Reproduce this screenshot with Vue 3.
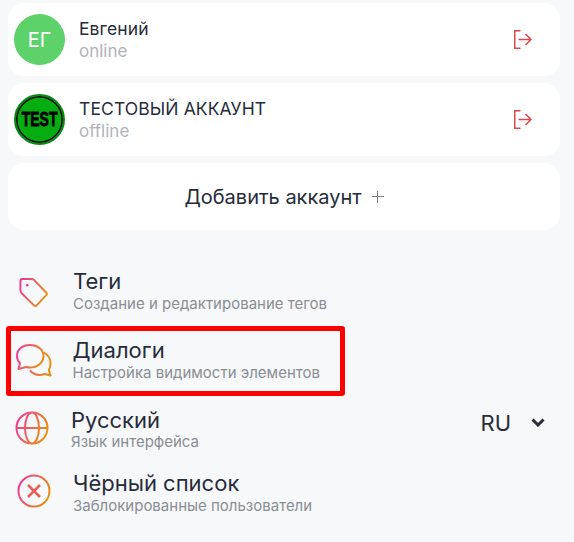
<script setup>
const accounts = [
  { id: 1, name: 'Евгений', status: 'online', initials: 'ЕГ' },
  { id: 2, name: 'ТЕСТОВЫЙ АККАУНТ', status: 'offline', test: true }
]
</script>

<template>
  <div class="page">
    <svg width="0" height="0" class="defs">
      <defs>
        <linearGradient id="grad" gradientUnits="objectBoundingBox" x1="0" y1="0.2" x2="1" y2="0.6">
          <stop offset="0" stop-color="#f0389a" />
          <stop offset="1" stop-color="#e8900f" />
        </linearGradient>
        <linearGradient id="grad-small" gradientUnits="objectBoundingBox" x1="0" y1="0.5" x2="1" y2="0.5">
          <stop offset="0" stop-color="#ea6a60" />
          <stop offset="1" stop-color="#e8900f" />
        </linearGradient>
      </defs>
    </svg>

    <div class="accounts">
      <div v-for="acc in accounts" :key="acc.id" class="card account">
        <div v-if="acc.test" class="avatar test"><span>TEST</span></div>
        <div v-else class="avatar">{{ acc.initials }}</div>
        <div class="account-text">
          <div class="account-name">{{ acc.name }}</div>
          <div class="account-status">{{ acc.status }}</div>
        </div>
        <svg class="logout" width="18" height="19" viewBox="0 0 18 19" fill="none" stroke="#e0464c" stroke-width="1.5">
          <path d="M6.500 0.750H0.750V18.250H6.500" />
          <path d="M4.500 9.500H17M11.500 4L17 9.500L11.500 15" />
        </svg>
      </div>
      <div class="card add">Добавить аккаунт<span class="plus"><i></i><i></i></span></div>
    </div>

    <div class="menu">
      <div class="row row-tags">
        <svg class="icon" width="31" height="31" viewBox="0 0 32 32" fill="none" stroke="url(#grad)" stroke-width="2" stroke-linejoin="round">
          <path d="M2.500 4.500C2.500 3 3 2 4.500 2L14 2C15 2 16 2.500 16.500 3L29.500 16.500C30 17.200 30 18 29.500 18.500L19 29.500C18.200 30.200 17.500 30.200 16.800 29.500L4 17C3 16 2.500 15 2.500 14Z" />
          <circle cx="9.500" cy="8.500" r="1.400" fill="#f0389a" stroke="none" />
        </svg>
        <div class="row-text">
          <div class="row-title">Теги</div>
          <div class="row-sub">Создание и редактирование тегов</div>
        </div>
      </div>

      <div class="row row-dialogs">
        <svg class="icon" width="38" height="36" viewBox="0 0 38 36" fill="none" stroke-width="2" stroke-linejoin="round">
          <path stroke="url(#grad)" d="M15 2C7.500 2 2 6.500 2 13C2 16 3.200 18.500 5 20.200L3.500 26L11 24C12.300 24.300 13.600 24.500 15 24.500C22.500 24.500 28.500 19.500 28.500 13C28.500 6.500 22.500 2 15 2Z" />
          <path stroke="url(#grad-small)" d="M29 9.500C33 12 35.500 15.500 35.500 20C35.500 23 34.800 25.500 33.800 27L35.500 32.500L29.500 31C25 32.500 19 32 15 27.500" />
        </svg>
        <div class="row-text">
          <div class="row-title">Диалоги</div>
          <div class="row-sub">Настройка видимости элементов</div>
        </div>
        <div class="highlight"></div>
      </div>

      <div class="row row-lang">
        <svg class="icon" width="34" height="34" viewBox="0 0 34 34" fill="none" stroke="url(#grad)" stroke-width="2">
          <path d="M1.500 17A15.500 15.500 0 1 1 32.500 17A15.500 15.500 0 1 1 1.500 17ZM10 17A7 15.500 0 1 1 24 17A7 15.500 0 1 1 10 17ZM1.500 17H32.500" />
        </svg>
        <div class="row-text">
          <div class="row-title">Русский</div>
          <div class="row-sub">Язык интерфейса</div>
        </div>
        <div class="lang-select">
          RU
          <svg width="14" height="9" viewBox="0 0 14 9" fill="none" stroke="#262c3a" stroke-width="3">
            <path d="M1.500 1.500L7 7L12.500 1.500" />
          </svg>
        </div>
      </div>

      <div class="row row-black">
        <svg class="icon" width="34" height="34" viewBox="0 0 34 34" fill="none" stroke="url(#grad)" stroke-width="2">
          <circle cx="17" cy="17" r="15.500" />
          <path d="M11 11L23 23M23 11L11 23" stroke="#e8605a" stroke-width="2.600" />
        </svg>
        <div class="row-text">
          <div class="row-title">Чёрный список</div>
          <div class="row-sub">Заблокированные пользователи</div>
        </div>
      </div>
    </div>
  </div>
</template>

<style scoped>
.page {
  width: 574px;
  height: 542px;
  background: #f7f8fa;
  padding: 3px 14px 0 8px;
  box-sizing: border-box;
  overflow: hidden;
  font-family: Inter, "Noto Sans", sans-serif;
  color: #262c3a;
}
.defs {
  position: absolute;
}
.accounts {
  display: flex;
  flex-direction: column;
  gap: 7px;
}
.card {
  background: #fff;
  border-radius: 16px;
}
.account {
  height: 73px;
  display: flex;
  align-items: center;
  padding: 0 28px 0 6px;
}
.avatar {
  width: 51px;
  height: 51px;
  border-radius: 50%;
  background: #5dd16a;
  color: #fff;
  font-size: 20px;
  display: flex;
  align-items: center;
  justify-content: center;
  flex-shrink: 0;
}
.avatar.test {
  background: #06ad10;
  border: 2px solid #0a8a12;
  box-sizing: border-box;
  box-shadow: inset 0 0 0 1.500px #000;
  color: #000;
  font-family: "Liberation Sans", sans-serif;
  font-weight: 700;
  font-size: 20px;
}
.avatar.test span {
  display: inline-block;
  transform: scaleX(0.7);
  -webkit-text-stroke: 0.8px #000;
}
.account-text {
  margin-left: 14px;
  flex: 1;
}
.account-name {
  font-size: 17.500px;
  font-weight: 400;
  line-height: 22px;
  letter-spacing: 0.1px;
}
.account-status {
  font-size: 17px;
  line-height: 22px;
  color: #b1b3b9;
}
.logout {
  flex-shrink: 0;
}
.add {
  height: 67px;
  display: flex;
  align-items: center;
  justify-content: center;
  font-size: 20px;
}
.plus {
  position: relative;
  width: 12px;
  height: 12px;
  margin-left: 10px;
}
.plus i {
  position: absolute;
  background: #777a82;
}
.plus i:first-child {
  left: 0;
  right: 0;
  top: 5px;
  height: 1.500px;
}
.plus i:last-child {
  top: 0;
  bottom: 0;
  left: 5px;
  width: 1.500px;
}
.menu {
  margin-top: 31px;
}
.row {
  position: relative;
  display: flex;
  align-items: center;
}
.row-tags {
  height: 63px;
}
.row-dialogs {
  height: 73px;
}
.row-lang {
  height: 61px;
}
.row-black {
  height: 66px;
}
.row-title {
  font-size: 22px;
  font-weight: 400;
  line-height: 24px;
  margin-top: -3px;
}
.row-sub {
  font-size: 15px;
  line-height: 18px;
  margin-top: 2px;
  color: #8a8d94;
}
.row-tags .icon {
  margin-left: 10px;
}
.row-tags .row-text {
  margin-left: 24px;
}
.row-dialogs .icon {
  margin-left: 7px;
}
.row-dialogs .row-text {
  margin-left: 19.500px;
  padding-top: 2px;
}
.row-lang .icon {
  margin-left: 7px;
}
.row-lang .row-text {
  margin-left: 22px;
  padding-top: 7px;
}
.row-lang .row-sub {
  margin-top: 1px;
}
.row-black .icon {
  margin-left: 9px;
}
.row-black .row-text {
  margin-left: 22px;
  padding-top: 6px;
}
.highlight {
  position: absolute;
  left: -2px;
  top: 2px;
  width: 339px;
  height: 70px;
  border: 5px solid #fe0000;
  border-radius: 3px;
  box-sizing: border-box;
}
.lang-select {
  margin-left: auto;
  margin-right: 15px;
  margin-bottom: 9px;
  display: flex;
  align-items: center;
  gap: 20px;
  font-size: 22px;
}
.lang-select svg {
  margin-bottom: 2px;
}
</style>

<style>
html, body {
  background: #f7f8fa;
}
</style>
